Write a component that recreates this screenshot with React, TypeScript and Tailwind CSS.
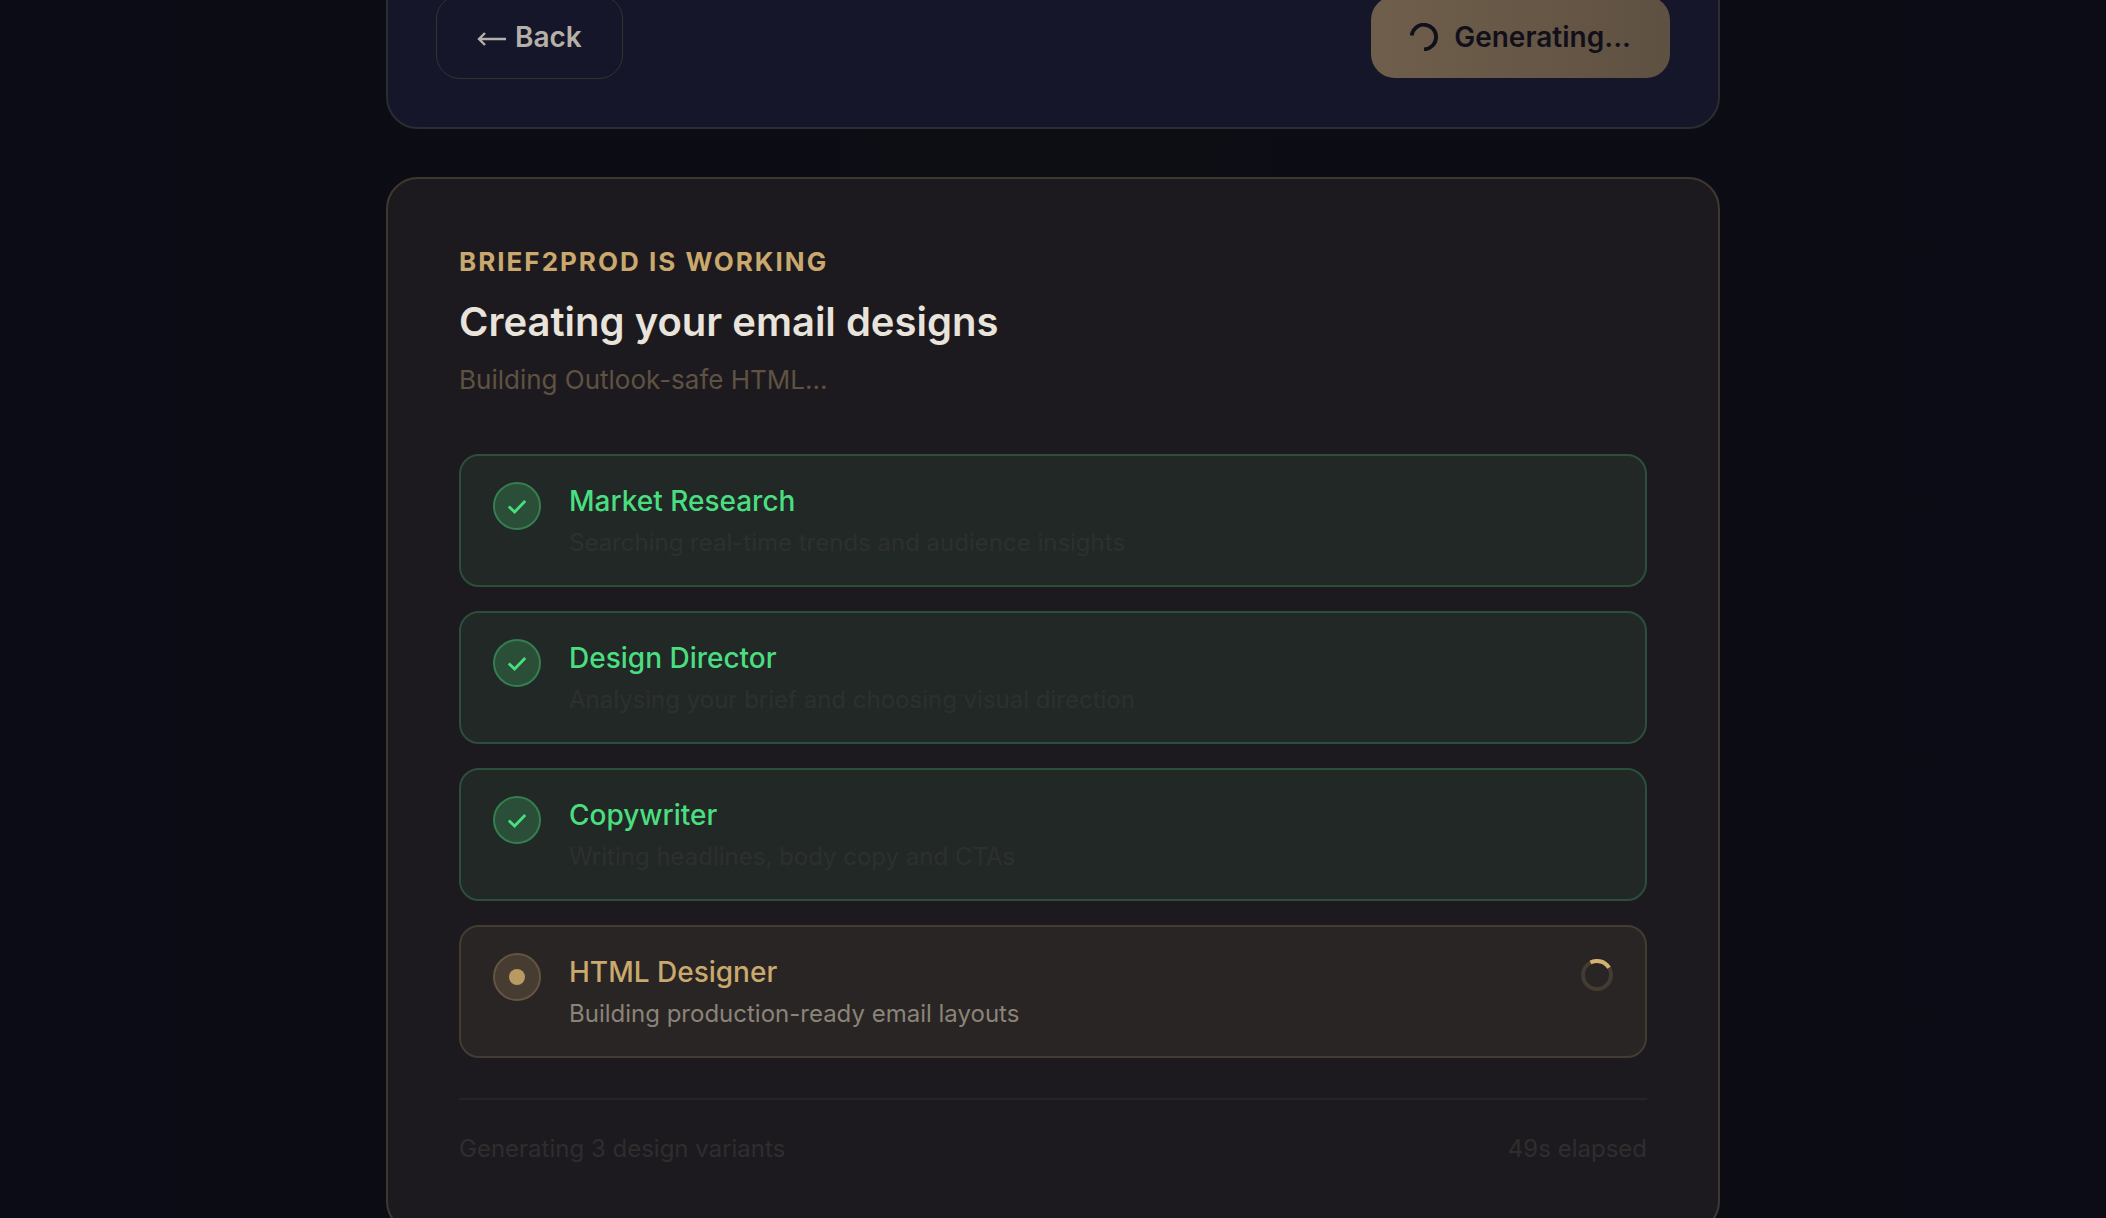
type Status = "done" | "active";

const steps: { name: string; desc: string; status: Status }[] = [
  { name: "Market Research", desc: "Searching real-time trends and audience insights", status: "done" },
  { name: "Design Director", desc: "Analysing your brief and choosing visual direction", status: "done" },
  { name: "Copywriter", desc: "Writing headlines, body copy and CTAs", status: "done" },
  { name: "HTML Designer", desc: "Building production-ready email layouts", status: "active" },
];

function StepCard({ name, desc, status }: { name: string; desc: string; status: Status }) {
  const done = status === "done";

  return (
    <li className={`flex items-start rounded-[20px] border-2 px-8 py-6 ${done ? "border-[#2c4f3b] bg-[#212826]" : "border-[#443b32] bg-[#292524]"}`}>
      <div className={`mt-[2px] flex size-12 shrink-0 items-center justify-center rounded-full border-2 ${done ? "border-[#347f50] bg-[#2b4e38]" : "border-[#645442] bg-[#473c31]"}`}>
        {done ? (
          <svg width="20" height="16" viewBox="0 0 20 16" fill="none" className="text-[#4ade80]">
            <path d="M1.8 8.5 7.6 14 18.2 3" stroke="currentColor" strokeWidth="2.8" />
          </svg>
        ) : (
          <span className="size-4 rounded-full bg-[#b89a62]" />
        )}
      </div>

      <div className="ml-7 flex-1">
        <h3 className={`text-[28px] leading-[42px] font-medium ${done ? "text-[#4ade80]" : "text-[#c9a96e]"}`}>{name}</h3>
        <p className={`mt-[3px] text-[24px] leading-[36px] ${done ? "text-[#2e302f]" : "text-[#8a8478]"}`}>{desc}</p>
      </div>

      {/* Spinner */}
      {!done && (
        <svg width="32" height="32" viewBox="0 0 32 32" fill="none" className="mt-[8px] shrink-0">
          <circle cx="16" cy="16" r="14" stroke="#443b32" strokeWidth="4" />
          <path d="M9.5 3.6A14 14 0 0 1 28 8.8" stroke="#d4b26f" strokeWidth="4" />
        </svg>
      )}
    </li>
  );
}

export default function App() {
  return (
    <main className="h-screen overflow-hidden bg-linear-to-r from-[#0c0c16] via-[#0d0d14] to-[#0c0c16] font-['Inter',sans-serif]">
      <div className="mx-auto -mt-[55px] flex w-full max-w-[1334px] flex-col gap-12">
        {/* Form actions */}
        <section className="flex items-center justify-between rounded-[32px] border-2 border-[#2c2d30] bg-[#151629] p-12">
          <button className="flex h-[84px] items-center gap-2 rounded-[24px] border border-[#303331] px-10 text-[28px] font-semibold text-[#b5b0a8]">
            <svg width="30" height="18" viewBox="0 0 30 18" fill="none" aria-hidden="true">
              <path d="M2 11H29M8 5 2 11 8 17" stroke="currentColor" strokeWidth="2.4" />
            </svg>
            Back
          </button>
          <button className="flex h-[82px] items-center gap-4 rounded-[24px] bg-linear-to-r from-[#6f5e4b] to-[#5f5142] px-[39px] text-[28px] font-semibold text-[#11101a]">
            <svg width="28" height="28" viewBox="0 0 28 28" fill="none" aria-hidden="true">
              <path d="M1.6 12.4A12.3 12.3 0 1 1 14 26.3" stroke="currentColor" strokeWidth="3.8" />
            </svg>
            Generating...
          </button>
        </section>

        {/* Progress */}
        <section className="rounded-[32px] border-2 border-[#40382f] bg-[#1d1a1f] px-[71px] pt-[65px] pb-16">
          <header className="mb-[54px]">
            <p className="text-[26px] leading-[36px] font-bold tracking-[2px] text-[#c9a96e] uppercase">Brief2Prod is working</p>
            <h2 className="mt-[17px] text-[40px] leading-[50px] font-semibold text-[#e8e4dc]">Creating your email designs</h2>
            <p className="mt-[13px] text-[26px] leading-[40px] text-[#5f5243]">Building Outlook-safe HTML...</p>
          </header>

          <ol className="flex flex-col gap-6">
            {steps.map((step) => (
              <StepCard key={step.name} {...step} />
            ))}
          </ol>

          <footer className="mt-10 flex justify-between border-t-2 border-[#262425] pt-[31px] text-[24px] leading-[36px] text-[#2d2e2d]">
            <span>Generating 3 design variants</span>
            <span>49s elapsed</span>
          </footer>
        </section>
      </div>
    </main>
  );
}
